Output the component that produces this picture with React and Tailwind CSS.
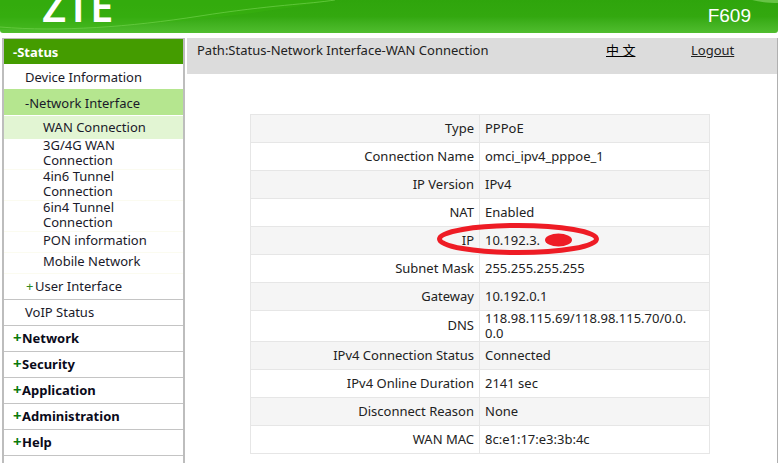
const font = { fontFamily: '"Noto Sans", "Noto Sans CJK SC", sans-serif' };

const rows = [
  ["Type", "PPPoE"],
  ["Connection Name", "omci_ipv4_pppoe_1"],
  ["IP Version", "IPv4"],
  ["NAT", "Enabled"],
  ["IP", "10.192.3."],
  ["Subnet Mask", "255.255.255.255"],
  ["Gateway", "10.192.0.1"],
  ["DNS", "118.98.115.69/118.98.115.70/0.0.0.0"],
  ["IPv4 Connection Status", "Connected"],
  ["IPv4 Online Duration", "2141 sec"],
  ["Disconnect Reason", "None"],
  ["WAN MAC", "8c:e1:17:e3:3b:4c"],
];

function Sub({ children, className = "" }) {
  return (
    <div className={"pl-[39px] pr-4 pb-[2px] border-b border-[#fbfbf0] text-[#1a1a2a] leading-[15.5px] flex items-center " + className}>
      {children}
    </div>
  );
}

function Top({ name }) {
  return (
    <div className="h-[26px] border-b border-[#c4c4c4] pl-[9px] flex items-center font-bold text-[13px] text-[#0a0a1a]">
      <span className="text-[#0a7a0a] text-[15px] leading-none -mt-[2px] w-[9px]">+</span>
      <span>{name}</span>
    </div>
  );
}

export default function App() {
  return (
    <div className="w-[782px] h-[463px] bg-white overflow-hidden text-[13px] text-[#222]" style={font}>
      <header className="relative h-[33px] w-[778px] overflow-hidden rounded-bl-[3px] rounded-br-[3px] bg-gradient-to-b from-[#2fa50c] via-[#33a80f] to-[#50bd2e]">
        <svg className="absolute left-0 top-0" width="778" height="33" viewBox="0 0 778 33">
          <path d="M0 0H335C260 14 130 30 0 29Z" fill="#3ab50f" opacity="0.4" />
          <path d="M0 27C60 32 130 27 200 16S310 4 335 0" fill="none" stroke="#6fd04a" strokeWidth="1" opacity="0.7" />
          <path d="M752 0C760 2 770 3 778 3V0Z" fill="#7fd060" opacity="0.7" />
        </svg>
        <div className="absolute -top-[15px] left-[42px] text-[42px] leading-[42px] text-white font-semibold">ZTE</div>
        <div className="absolute top-[4px] right-[27px] text-[19px] leading-[24px] text-white" style={{ fontFamily: '"Liberation Sans", sans-serif' }}>F609</div>
      </header>
      <div className="flex h-[430px] pt-[5px] pl-[2px] w-[778px]">
        <nav className="w-[183px] shrink-0 h-full border-t border-r-2 border-[#bdbdbd] border-l-2">
          <div className="h-[25px] pt-[2px] bg-[#449c00] text-white font-bold pl-[9px] flex items-center">-Status</div>
          <div className="h-[25px] pt-[2px] pl-[21px] flex items-center text-[#1a1a2a]">Device Information</div>
          <div className="h-[26px] pt-[3px] bg-[#b5e68f] pl-[21px] flex items-center text-[#1a1a2a]">-Network Interface</div>
          <div className="h-[23px] mt-px bg-[#e2f5d3] pl-[39px] flex items-center text-[#1a1a2a]">WAN Connection</div>
          <Sub className="h-[31px]">3G/4G WAN Connection</Sub>
          <Sub className="h-[31px]">4in6 Tunnel Connection</Sub>
          <Sub className="h-[31px]">6in4 Tunnel Connection</Sub>
          <Sub className="h-[21px]">PON information</Sub>
          <Sub className="h-[21px]">Mobile Network</Sub>
          <div className="h-[26px] pl-[22px] flex items-center border-b border-[#c4c4c4] text-[#1a1a2a]">
            <span className="text-[#2f8a1f] w-[9px]">+</span>User Interface
          </div>
          <div className="h-[26px] pl-[21px] flex items-center border-b border-[#c4c4c4] text-[#1a1a2a]">VoIP Status</div>
          <Top name="Network" />
          <Top name="Security" />
          <Top name="Application" />
          <Top name="Administration" />
          <Top name="Help" />
        </nav>
        <main className="w-[593px] ml-[2px] border-r border-[#b0b0b0] h-full">
          <div className="h-[36px] bg-[#dcdcdc] flex items-start pt-[3px] pl-[10px] text-[#222]">
            <span className="w-[409px]">Path:Status-Network Interface-WAN Connection</span>
            <a className="underline text-black w-[85px] whitespace-pre">中 文</a>
            <a className="underline">Logout</a>
          </div>
          <div className="relative ml-[63px] mt-[40px] w-[460px] border border-[#e6e6e6] border-b-0">
            {rows.map(([k, v], i) => (
              <div key={k} className={"grid grid-cols-[229px_1fr] border-b border-[#e6e6e6] " + (i % 2 === 0 ? "bg-[#f5f5f5]" : "bg-white")}>
                <div className={"text-right pr-[5px] border-r border-[#e6e6e6] flex items-center justify-end " + (k === "DNS" ? "h-[30px]" : "h-[27px]")}>{k}</div>
                <div className="pl-[5px] pr-[20px] flex items-center break-all leading-[15px]">{v}</div>
              </div>
            ))}
            <svg className="absolute left-[185px] top-[106px]" width="164" height="38" viewBox="0 0 164 38">
              <ellipse cx="82" cy="18" rx="78.5" ry="13.5" fill="none" stroke="#ee1c25" strokeWidth="5" />
              <ellipse cx="122.5" cy="19" rx="13.5" ry="6.5" fill="#ee1c25" />
            </svg>
          </div>
        </main>
      </div>
    </div>
  );
}
